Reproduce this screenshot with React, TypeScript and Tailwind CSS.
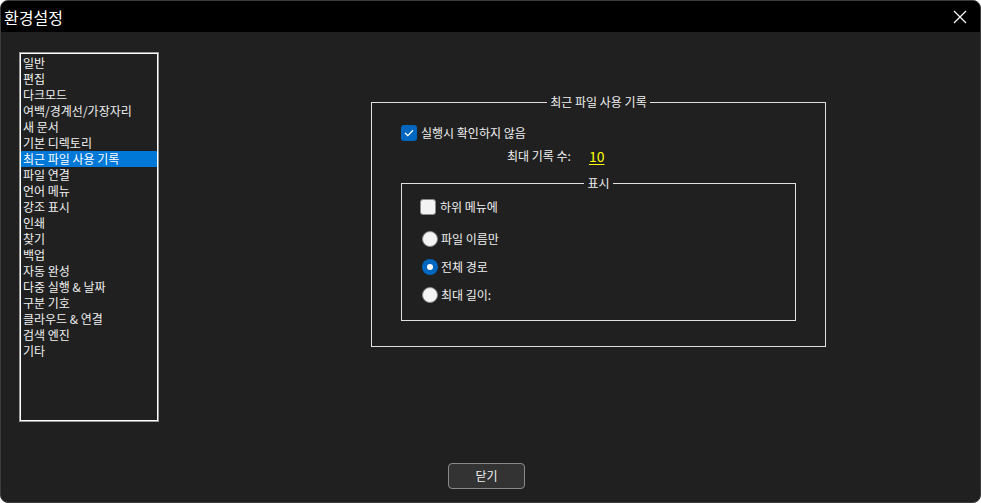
import React from 'react';

const items = [
  '일반', '편집', '다크모드', '여백/경계선/가장자리', '새 문서', '기본 디렉토리', '최근 파일 사용 기록',
  '파일 연결', '언어 메뉴', '강조 표시', '인쇄', '찾기', '백업', '자동 완성', '다중 실행 & 날짜',
  '구분 기호', '클라우드 & 연결', '검색 엔진', '기타',
];

const Radio = ({ on, label }: { on?: boolean; label: string }) => (
  <div className="flex items-center h-4">
    {on ? (
      <span className="w-4 h-4 rounded-full bg-[#0067c0] flex items-center justify-center">
        <span className="w-[6px] h-[6px] rounded-full bg-white" />
      </span>
    ) : (
      <span className="w-4 h-4 rounded-full bg-[#f3f3f3] border border-[#8a8a8a]" />
    )}
    <span className="ml-[3px]">{label}</span>
  </div>
);

export default function App() {
  return (
    <div
      className="w-[981px] h-[503px] bg-[#202020] border border-[#3c3c3c] rounded-lg overflow-hidden flex flex-col text-[12px] leading-4 text-[#f0f0f0]"
      style={{ fontFamily: '"Noto Sans CJK KR", "Noto Sans", sans-serif' }}
    >
      {/* title bar */}
      <div className="h-[31px] bg-black flex items-center justify-between pl-[3px] pr-[12px] shrink-0">
        <span className="text-[16px] text-white">환경설정</span>
        <svg width="14" height="14" viewBox="0 0 14 14" className="mr-[1px]">
          <path d="M1 1L13 13M13 1L1 13" stroke="#ffffff" strokeWidth="1.2" />
        </svg>
      </div>

      <div className="flex pt-5 pl-[18px]">
        {/* category list */}
        <div className="w-[140px] h-[370px] border border-[#9a9a9a] shrink-0">
          <div className="w-full h-full border border-white py-px">
            {items.map((it, i) => (
              <div
                key={i}
                className={`h-4 pl-[2px] whitespace-nowrap ${i === 6 ? 'bg-[#0078d7] text-white' : ''}`}
              >
                {it}
              </div>
            ))}
          </div>
        </div>

        {/* recent files group */}
        <fieldset className="ml-[212px] mt-[42px] w-[455px] h-[253px] border border-[#e0e0e0] shrink-0">
          <legend className="mx-auto px-[3px] text-[#f0f0f0]">최근 파일 사용 기록</legend>
          <div className="ml-[29px] mt-[15px] flex items-center h-4">
            <span className="w-4 h-4 rounded-[3px] bg-[#0067c0] flex items-center justify-center">
              <svg width="10" height="8" viewBox="0 0 10 8">
                <path d="M1 4L3.8 6.6L9 1.2" fill="none" stroke="#ffffff" strokeWidth="1.3" />
              </svg>
            </span>
            <span className="ml-[4px]">실행시 확인하지 않음</span>
          </div>
          <div className="ml-[135px] mt-[7px] flex items-center h-4">
            <span>최대 기록 수:</span>
            <span className="ml-[18px] text-[14px] text-[#ffff00] underline underline-offset-2">10</span>
          </div>

          {/* display group */}
          <fieldset className="ml-[29px] mt-[11px] w-[395px] h-[146px] border border-[#e0e0e0]">
            <legend className="mx-auto px-[3px]">표시</legend>
            <div className="ml-[18px] mt-[8px] flex items-center h-4">
              <span className="w-4 h-4 rounded-[3px] bg-[#f3f3f3] border border-[#8a8a8a]" />
              <span className="ml-[4px]">하위 메뉴에</span>
            </div>
            <div className="ml-[20px] mt-4 flex flex-col gap-3">
              <Radio label="파일 이름만" />
              <Radio on label="전체 경로" />
              <Radio label="최대 길이:" />
            </div>
          </fieldset>
        </fieldset>
      </div>

      <div className="pl-[447px] mt-[41px]">
        <button className="w-[77px] h-[26px] bg-[#333333] border border-[#8a8a8a] rounded-[4px] text-[#f0f0f0]">
          닫기
        </button>
      </div>
    </div>
  );
}
